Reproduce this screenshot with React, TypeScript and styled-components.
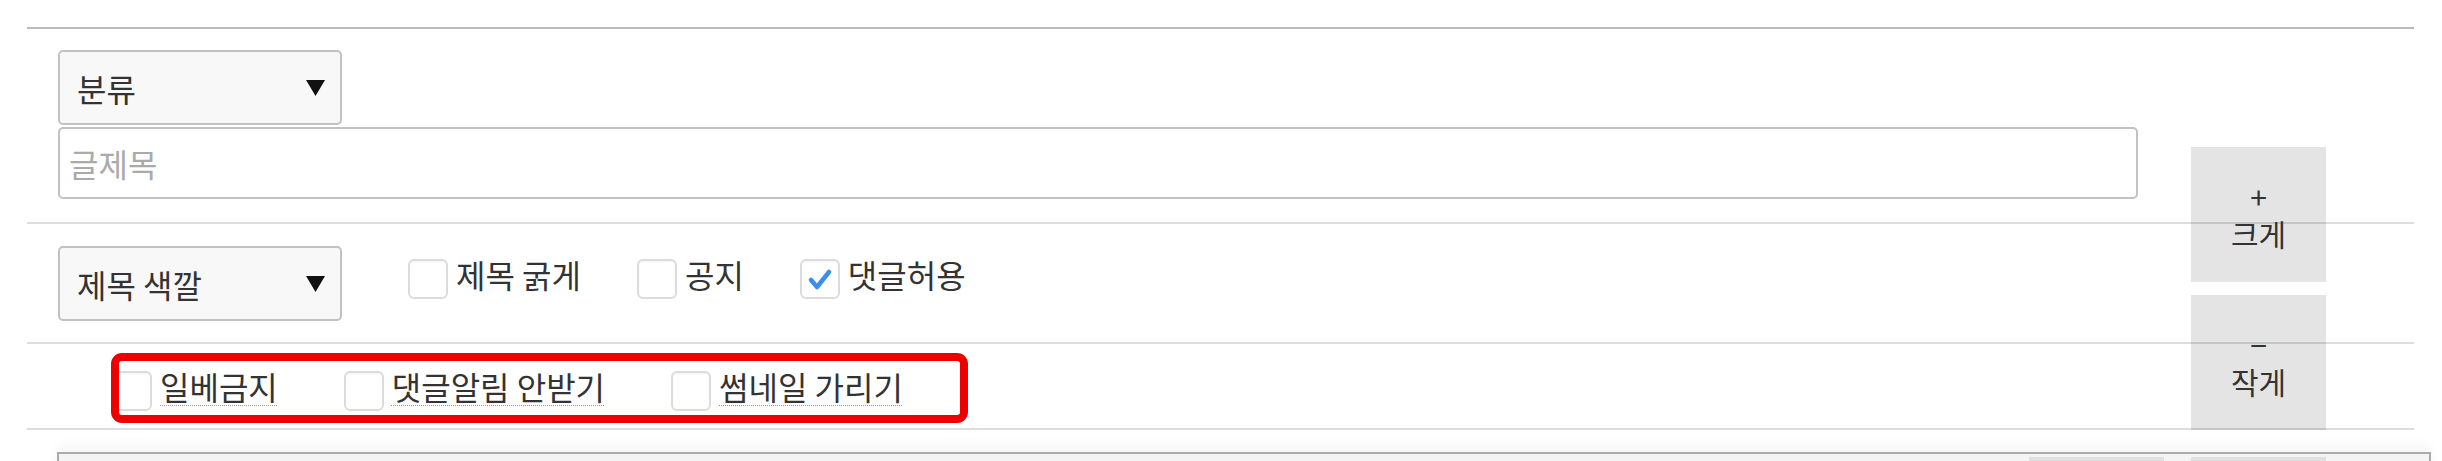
import styled, { createGlobalStyle } from "styled-components";
import { useState } from "react";

const GlobalStyle = createGlobalStyle`
  html, body {
    margin: 0;
    background: #fff;
  }
  body {
    font-family: "Noto Sans CJK KR", "Noto Sans", sans-serif;
    color: #333;
  }
`;

const Caret = () => (
  <CaretIcon width="19" height="16" viewBox="0 0 19 16">
    <polygon points="0,0 19,0 9.5,16" fill="#111" />
  </CaretIcon>
);

const Check = () => (
  <svg width="28" height="28" viewBox="0 0 28 28">
    <polyline
      points="5,15 11,22 23,7"
      fill="none"
      stroke="#3b8ef0"
      strokeWidth="4.5"
      strokeLinecap="round"
      strokeLinejoin="round"
    />
  </svg>
);

type OptionProps = {
  label: string;
  checked?: boolean;
  dotted?: boolean;
};

const Option = ({ label, checked = false, dotted = false }: OptionProps) => {
  const [on, setOn] = useState<boolean>(checked);
  return (
    <OptionLabel onClick={() => setOn((v) => !v)}>
      <Box>{on && <Check />}</Box>
      <OptionText $dotted={dotted}>{label}</OptionText>
    </OptionLabel>
  );
};

const App = () => {
  return (
    <Page>
      <GlobalStyle />
      <Form>
        <TitleRow $row={1}>
          <SelectWrap>
            <Select defaultValue="">
              <option value="">분류</option>
            </Select>
            <Caret />
          </SelectWrap>
          <TitleInput placeholder="글제목" />
        </TitleRow>

        <OptionRow $row={2}>
          <SelectWrap>
            <Select defaultValue="">
              <option value="">제목 색깔</option>
            </Select>
            <Caret />
          </SelectWrap>
          <CheckGroup>
            <Option label="제목 굵게" />
            <Option label="공지" />
            <Option label="댓글허용" checked />
          </CheckGroup>
        </OptionRow>

        <ExtraRow $row={3}>
          <Highlight>
            <Option label="일베금지" dotted />
            <Option label="댓글알림 안받기" dotted />
            <Option label="썸네일 가리기" dotted />
          </Highlight>
        </ExtraRow>

        <ButtonStack>
          <SizeButton>
            <span>+</span>
            <span>크게</span>
          </SizeButton>
          <SizeButton>
            <span>−</span>
            <span>작게</span>
          </SizeButton>
        </ButtonStack>
      </Form>

      <Editor>
        <Toolbar>
          <ToolButton aria-label="tool 1" />
          <ToolButton aria-label="tool 2" />
        </Toolbar>
      </Editor>
    </Page>
  );
};

export default App;

const Page = styled.div`
  width: 2442px;
  height: 461px;
  padding-top: 27px;
  box-sizing: border-box;
  overflow: hidden;
`;

const Form = styled.div`
  display: grid;
  grid-template-columns: 1fr 135px 88px;
  width: 2387px;
  margin-left: 27px;
  border-top: 2px solid #bbb;
`;

const Row = styled.div<{ $row: number }>`
  grid-column: 1 / -1;
  grid-row: ${(p) => p.$row};
  border-bottom: 2px solid #ddd;
  box-sizing: border-box;
`;

const TitleRow = styled(Row)`
  display: flex;
  flex-direction: column;
  align-items: flex-start;
  gap: 2px;
  padding: 21px 276px 23px 31px;
`;

const OptionRow = styled(Row)`
  display: flex;
  align-items: flex-start;
  gap: 66px;
  padding: 22px 0 21px 31px;
`;

const ExtraRow = styled(Row)`
  padding: 9px 0 5px 84px;
`;

const SelectWrap = styled.div`
  position: relative;
  width: 284px;
  height: 75px;
`;

const Select = styled.select`
  appearance: none;
  width: 100%;
  height: 100%;
  box-sizing: border-box;
  background: #f8f8f8;
  border: 2px solid #c2c2c2;
  border-radius: 5px;
  padding: 0 0 0 17px;
  font-family: inherit;
  font-size: 32px;
  color: #333;
  outline: none;
`;

const CaretIcon = styled.svg`
  position: absolute;
  right: 17px;
  top: 50%;
  transform: translateY(-50%);
  pointer-events: none;
`;

const TitleInput = styled.input`
  width: 100%;
  height: 72px;
  box-sizing: border-box;
  border: 2px solid #c2c2c2;
  border-radius: 5px;
  padding: 0 9px;
  font-family: inherit;
  font-size: 32px;
  color: #333;
  outline: none;

  &::placeholder {
    color: #aaa;
  }
`;

const CheckGroup = styled.div`
  display: flex;
  gap: 56px;
  margin-top: 8px;
`;

const Highlight = styled.div`
  display: flex;
  align-items: flex-start;
  gap: 66px;
  width: 857px;
  height: 70px;
  box-sizing: border-box;
  padding: 13px 0 0 1px;
  border-radius: 11px;
  outline: 8px solid #ee0000;
  outline-offset: -8px;
`;

const OptionLabel = styled.label`
  display: flex;
  align-items: center;
  gap: 8px;
  font-size: 32px;
  line-height: 40px;
  color: #333;
  cursor: pointer;
  user-select: none;
`;

const Box = styled.span`
  display: flex;
  align-items: center;
  justify-content: center;
  flex-shrink: 0;
  width: 40px;
  height: 40px;
  box-sizing: border-box;
  border: 2px solid #dcdcdc;
  border-radius: 6px;
  background: #fff;
  box-shadow: inset 0 1px 2px rgba(0, 0, 0, 0.05);
`;

const OptionText = styled.span<{ $dotted: boolean }>`
  margin-bottom: 9px;
  white-space: nowrap;
  text-decoration: ${(p) => (p.$dotted ? "underline dotted #999" : "none")};
  text-decoration-thickness: 1px;
  text-underline-offset: 5px;
`;

const ButtonStack = styled.div`
  grid-column: 2;
  grid-row: 1 / 4;
  align-self: end;
  display: flex;
  flex-direction: column;
  gap: 13px;
`;

const SizeButton = styled.button`
  display: flex;
  flex-direction: column;
  align-items: center;
  justify-content: center;
  width: 135px;
  height: 135px;
  padding: 0;
  border: none;
  background: rgba(0, 0, 0, 0.105);
  font-family: inherit;
  font-size: 30px;
  line-height: 37px;
  color: #333;
  cursor: pointer;
`;

const Editor = styled.div`
  width: 2374px;
  height: 200px;
  margin: 22px 0 0 57px;
  box-sizing: border-box;
  border: 2px solid #aaa;
  border-bottom: none;
  box-shadow: 0 -6px 12px rgba(0, 0, 0, 0.04);
`;

const Toolbar = styled.div`
  display: flex;
  justify-content: flex-end;
  gap: 27px;
  height: 60px;
  padding: 3px 103px 0 0;
  background: #f4f4f4;
`;

const ToolButton = styled.button`
  width: 135px;
  height: 48px;
  border: none;
  background: #e0e0e0;
`;
